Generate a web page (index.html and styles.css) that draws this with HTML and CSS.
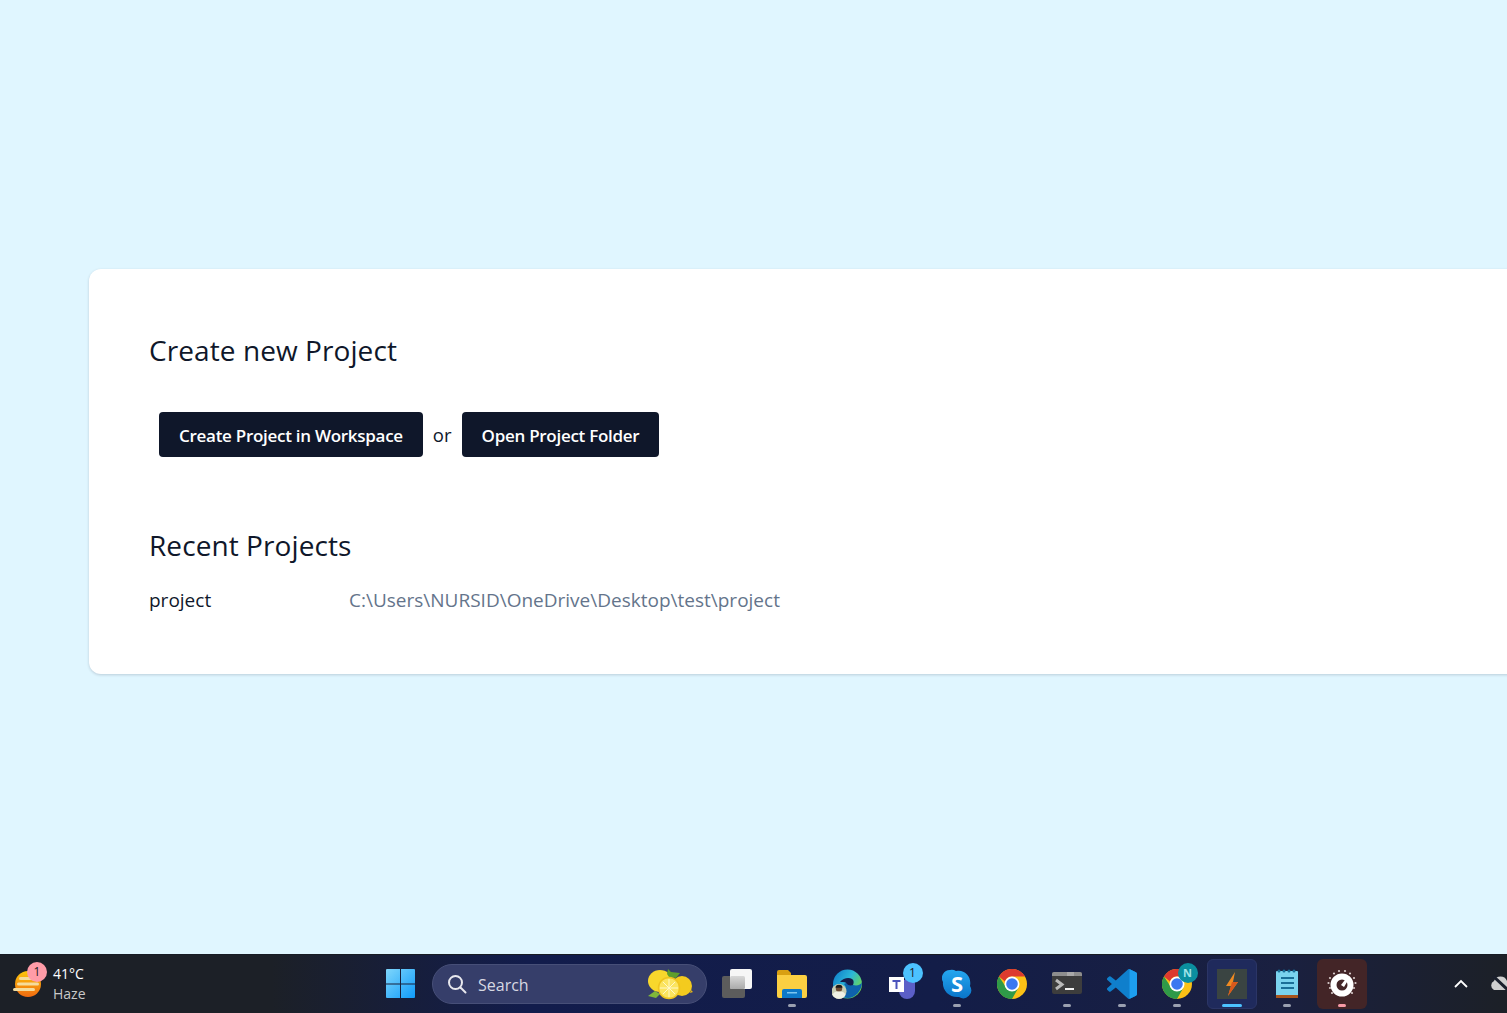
FILE: index.html
```html
<!DOCTYPE html>
<html lang="en">
<head>
<meta charset="utf-8">
<title>Projects</title>
<link rel="stylesheet" href="styles.css">
</head>
<body>
<main class="stage">
  <section class="card">
    <h2 class="title">Create new Project</h2>
    <div class="actions">
      <button class="btn"><span class="btn-label">Create Project in Workspace</span></button>
      <span class="or">or</span>
      <button class="btn"><span class="btn-label">Open Project Folder</span></button>
    </div>
    <h2 class="title recent">Recent Projects</h2>
    <div class="row">
      <span class="name">project</span>
      <span class="path">C:\Users\NURSID\OneDrive\Desktop\test\project</span>
    </div>
  </section>
</main>
<footer class="taskbar">
  <div class="weather">
    <div class="weather-icon">
      <svg width="30" height="30" viewBox="0 0 30 30"><defs><linearGradient id="sun" x1="0" y1="0" x2="0" y2="1"><stop offset="0" stop-color="#fdc70c"/><stop offset="1" stop-color="#f06a10"/></linearGradient></defs><circle cx="16" cy="15" r="13" fill="url(#sun)"/><g fill="#f5dc9c"><rect x="7" y="8" width="14" height="3" rx="1.500"/><rect x="5" y="13.500" width="22" height="3" rx="1.500"/><rect x="1" y="19" width="22" height="3" rx="1.500"/></g></svg>
      <span class="badge">1</span>
    </div>
    <div class="weather-text"><span class="temp">41°C</span><span class="cond">Haze</span></div>
  </div>
  <div class="apps">
    <div class="app">
      <svg width="30" height="30" viewBox="0 0 30 30"><defs><linearGradient id="win" x1="0" y1="0" x2="1" y2="1"><stop offset="0" stop-color="#7fd6fb"/><stop offset="1" stop-color="#0f9bfa"/></linearGradient></defs><path fill="url(#win)" d="M0 1a1 1 0 0 1 1-1h13v14.500H0zM15 0h13a1 1 0 0 1 1 1v13.500H15zM0 15.500h14V29H1a1 1 0 0 1-1-1zM15 15.500h14V28a1 1 0 0 1-1 1H15z"/></svg>
    </div>
    <div class="search">
      <svg width="22" height="22" viewBox="0 0 22 22" fill="none" stroke="#e8e8ee" stroke-width="2"><circle cx="9.500" cy="9.500" r="6.500"/><path d="M14.500 14.500l5 5" stroke-linecap="round"/></svg>
      <span class="search-text">Search</span>
      <svg class="lemon" width="46" height="32" viewBox="0 0 46 32"><ellipse cx="13" cy="13" rx="12" ry="11" fill="#f8d72c"/><ellipse cx="35" cy="18" rx="10" ry="10" fill="#f4cb1e"/><path d="M44 22l2 2-3 1z" fill="#e6b615"/><path d="M20 6l1-5 3 3 9 1-4 5-7-1z" fill="#5f9f2b"/><path d="M1 28l7-5 5 3-4 4z" fill="#7fb73a"/><circle cx="22" cy="20" r="10.500" fill="#fbe45f" stroke="#efc41e" stroke-width="1.500"/><g stroke="#fff8c8" stroke-width="1"><path d="M22 11v18M13 20h18M16 14l12 12M28 14L16 26"/></g></svg>
    </div>
    <div class="app">
      <svg width="30" height="30" viewBox="0 0 30 30"><defs><linearGradient id="tv" x1="0" y1="0" x2="0" y2="1"><stop offset="0" stop-color="#d8d8d8"/><stop offset="1" stop-color="#aaa"/></linearGradient></defs><rect x="0" y="7" width="23" height="22" rx="2" fill="#5c5c5c"/><rect x="8" y="0" width="22" height="20" rx="2" fill="#f6f6f6"/><rect x="8" y="7" width="15" height="13" rx="1.500" fill="url(#tv)"/></svg>
    </div>
    <div class="app">
      <svg width="30" height="30" viewBox="0 0 30 30"><path d="M0 3a2 2 0 0 1 2-2h9l3 3v22H2a2 2 0 0 1-2-2z" fill="#d9a012"/><path d="M0 6h28a2 2 0 0 1 2 2v19a2 2 0 0 1-2 2H2a2 2 0 0 1-2-2z" fill="#fbcf42"/><path d="M5 22a2 2 0 0 1 2-2h16a2 2 0 0 1 2 2v7H5z" fill="#0d78c8"/><rect x="10" y="23" width="10" height="1.500" fill="#7cc6f0"/></svg>
      <span class="dot"></span>
    </div>
    <div class="app">
      <svg width="30" height="30" viewBox="0 0 30 30"><defs><linearGradient id="edge" x1="0" y1="0" x2="1" y2=".6"><stop offset="0" stop-color="#0c77c9"/><stop offset=".55" stop-color="#2bb8d8"/><stop offset="1" stop-color="#6fd84a"/></linearGradient></defs><circle cx="15.500" cy="15" r="14.500" fill="url(#edge)"/><path d="M12 15c4-2 9-2 9 1 4 1 8 0 9-3 0 9-7 16-14 16-3 0-6-1-7-3 5-2 7-6 3-11z" fill="#0e62ac"/><path d="M8 13c3-4 9-5 12-3 2 1 2 4 1 6-3 1-5 0-6-1-1-2-3-2-7-2z" fill="#141d4b"/><circle cx="7" cy="22.500" r="7.500" fill="#c9ceb4"/><circle cx="7" cy="19.500" r="3.200" fill="#6e4d36"/><path d="M7 15.800a3.500 3 0 0 1 3.500 3H3.500a3.500 3 0 0 1 3.500-3z" fill="#1d1a18"/><path d="M.500 26c1-3 3-3.500 6.500-3.500s5.500.5 6.500 3.500a7.500 7.500 0 0 1-13 0z" fill="#f0f1e6"/></svg>
    </div>
    <div class="app">
      <svg width="30" height="30" viewBox="0 0 30 30"><circle cx="23" cy="9" r="5" fill="#7b83eb"/><path d="M12 11h14a2 2 0 0 1 2 2v9a8 8 0 0 1-16 0z" fill="#5b5fc7"/><rect x="2" y="8" width="15" height="15" fill="#fff"/><path d="M5.500 11h8v2h-3v7h-2v-7h-3z" fill="#4b53bc"/></svg>
      <span class="app-badge">1</span>
    </div>
    <div class="app">
      <svg width="30" height="30" viewBox="0 0 30 30"><defs><linearGradient id="sky" x1="0" y1="0" x2="0" y2="1"><stop offset="0" stop-color="#25a7ef"/><stop offset="1" stop-color="#0a75ca"/></linearGradient></defs><path d="M8 1a8 8 0 0 0-7 12c-1 8 6 16 16 15a8 8 0 0 0 11-11C30 7 22 0 14 2a8 8 0 0 0-6-1z" fill="url(#sky)"/><text class="skype" x="15" y="23" text-anchor="middle">S</text></svg>
      <span class="dot"></span>
    </div>
    <div class="app">
      <svg width="30" height="30" viewBox="0 0 30 30"><circle cx="15" cy="15" r="15" fill="#fbc116"/><path d="M2 7.500A15 15 0 0 1 28 7.500H15a7.500 7.500 0 0 0-7 5z" fill="#dd3a2e"/><path d="M2 7.500A15 15 0 0 0 15 30l6.500-11.500a7.500 7.500 0 0 1-13-1z" fill="#2f9a48"/><circle cx="15" cy="15" r="7.500" fill="#fff"/><circle cx="15" cy="15" r="5.800" fill="#3b78f0"/></svg>
    </div>
    <div class="app">
      <svg width="30" height="30" viewBox="0 0 30 30"><rect x="0" y="3" width="30" height="22" rx="2" fill="#3d3d3d"/><path d="M2 3h26a2 2 0 0 1 2 2v2H0V5a2 2 0 0 1 2-2z" fill="#8e8e8e"/><rect x="15" y="3" width="7" height="4" fill="#a9a9a9"/><path d="M4 11l6 4.500L4 20" fill="none" stroke="#b9b9b9" stroke-width="3"/><rect x="13" y="19" width="9" height="2" fill="#f2f2f2"/></svg>
      <span class="dot"></span>
    </div>
    <div class="app">
      <svg width="30" height="30" viewBox="0 0 100 100"><path fill="#0f7fcc" d="M70.900 99.300a6.200 6.200 0 0 0 5-.2l20.600-9.900A6.200 6.200 0 0 0 100 83.600V16.400a6.200 6.200 0 0 0-3.500-5.600L75.900.9a6.200 6.200 0 0 0-7.100 1.200L29.400 38 12.200 25a4.200 4.200 0 0 0-5.300.2L1.400 30.300a4.200 4.200 0 0 0 0 6.200L16.300 50 1.400 63.600a4.200 4.200 0 0 0 0 6.200l5.500 5a4.200 4.200 0 0 0 5.300.2l17.200-13 39.400 35.900a6.200 6.200 0 0 0 2.600 1.400zM75 27.300 45.100 50 75 72.700z"/><path fill="#1d9ff0" d="M75 .5l.9.4 20.600 9.900a6.200 6.200 0 0 1 3.500 5.600v67.200a6.200 6.200 0 0 1-3.500 5.600l-20.600 9.900-.9.4z"/></svg>
      <span class="dot"></span>
    </div>
    <div class="app">
      <svg width="30" height="30" viewBox="0 0 30 30"><circle cx="15" cy="15" r="15" fill="#fbc116"/><path d="M2 7.500A15 15 0 0 1 28 7.500H15a7.500 7.500 0 0 0-7 5z" fill="#dd3a2e"/><path d="M2 7.500A15 15 0 0 0 15 30l6.500-11.500a7.500 7.500 0 0 1-13-1z" fill="#2f9a48"/><circle cx="15" cy="15" r="7.500" fill="#fff"/><circle cx="15" cy="15" r="5.800" fill="#3b78f0"/></svg>
      <span class="app-badge teal">N</span>
      <span class="dot"></span>
    </div>
    <div class="app active">
      <svg width="30" height="30" viewBox="0 0 30 30"><rect width="30" height="30" fill="#3a4442"/><path d="M18 3L9 17h5l-3 10 10-14h-5z" fill="#ef8a22"/><path d="M15 13h6L11 27z" fill="#d8591c"/></svg>
      <span class="dot blue"></span>
    </div>
    <div class="app">
      <svg width="30" height="30" viewBox="0 0 30 30"><rect x="4" y="2" width="22" height="27" rx="1" fill="#7ad3ee"/><rect x="4" y="26" width="22" height="3" fill="#a8551c"/><g fill="#1a6f98"><circle cx="7" cy="2" r="1.500"/><circle cx="12" cy="2" r="1.500"/><circle cx="17" cy="2" r="1.500"/><circle cx="22" cy="2" r="1.500"/><rect x="9" y="8" width="13" height="2"/><rect x="9" y="13" width="13" height="2"/><rect x="9" y="18" width="13" height="2"/></g></svg>
      <span class="dot"></span>
    </div>
    <div class="app flagged">
      <svg width="34" height="34" viewBox="0 0 34 34"><circle cx="17" cy="18" r="8.500" fill="none" stroke="#fff" stroke-width="6"/><path d="M16 18l7-9 2 1-6 10z" fill="#fff"/><g fill="#d9cccc"><circle cx="5" cy="21" r="1.100"/><circle cx="3.500" cy="16" r="1.100"/><circle cx="5" cy="11" r="1.100"/><circle cx="9" cy="6.500" r="1.100"/><circle cx="14" cy="4" r="1.100"/><circle cx="20" cy="4" r="1.100"/><circle cx="25" cy="6.500" r="1.100"/><circle cx="29" cy="11" r="1.100"/><circle cx="30.500" cy="16" r="1.100"/><circle cx="29" cy="21" r="1.100"/><circle cx="7" cy="26" r="1.100"/><circle cx="27" cy="26" r="1.100"/></g></svg>
      <span class="dot pink"></span>
    </div>
  </div>
  <div class="tray">
    <svg width="16" height="10" viewBox="0 0 16 10" fill="none" stroke="#fff" stroke-width="1.800"><path d="M2 8l6-6 6 6"/></svg>
    <svg class="cloud" width="24" height="18" viewBox="0 0 24 18"><path d="M5 15a5 5 0 0 1 0-9 7 7 0 0 1 13 0 5 5 0 0 1 1 9z" fill="#cfcfcf"/><path d="M4 1l17 16" stroke="#1a1f2c" stroke-width="3"/></svg>
  </div>
</footer>
</body>
</html>
```

FILE: styles.css
```css
* { box-sizing: border-box; }
html, body { height: 100%; margin: 0; }
body {
  display: flex;
  flex-direction: column;
  overflow: hidden;
  background: #e0f6ff;
  color: #0f172a;
  font-family: "Open Sans", "Noto Sans", sans-serif;
}
.stage {
  flex: 1;
  display: flex;
  align-items: flex-start;
  min-height: 0;
  padding: 269px 0 0 89px;
}
.card {
  flex: none;
  width: 1600px;
  height: 405px;
  padding: 59px 60px 60px;
  background: #fff;
  border-radius: 12px;
  box-shadow: 0 1px 3px rgba(15, 23, 42, .18);
}
.title {
  margin: 0;
  font-size: 28px;
  font-weight: 400;
  line-height: 44px;
  letter-spacing: .08px;
}
.actions {
  display: flex;
  align-items: center;
  gap: 10px;
  margin: 40px 0 0 10px;
}
.btn {
  height: 45px;
  padding: 0 20px;
  border: 0;
  border-radius: 4px;
  background: #0f172a;
  color: #fff;
  font: 600 17px "Open Sans", sans-serif;
  letter-spacing: -.28px;
}
.btn-label { display: block; padding-top: 1px; }
.or { font-size: 18.500px; }
.recent { margin-top: 66px; }
.row {
  display: flex;
  margin-top: 19px;
  font-size: 19px;
  line-height: 28px;
}
.name { width: 200px; }
.path { color: #64748b; }

.taskbar {
  flex: none;
  height: 59px;
  display: flex;
  align-items: center;
  background: linear-gradient(90deg, #1c2027 0, #1c2027 18%, #121c4c 35%, #131d48 62%, #1a2040 85%, #1c2027 100%);
  border-top: 1px solid #181c24;
  color: #fff;
  overflow: hidden;
}
.weather {
  flex: none;
  width: 373px;
  display: flex;
  align-items: center;
  gap: 11px;
  padding-left: 12px;
}
.weather-icon { position: relative; width: 30px; height: 30px; }
.badge {
  position: absolute;
  top: -7px;
  right: -5px;
  width: 20px;
  height: 20px;
  border-radius: 50%;
  background: #ff9ca8;
  color: #222;
  font-size: 12px;
  line-height: 20px;
  text-align: center;
}
.weather-text { display: flex; flex-direction: column; font-size: 14px; line-height: 20px; }
.temp { color: #fff; }
.cond { color: #c9c9c9; }
.apps { display: flex; align-items: center; flex: none; }
.app {
  position: relative;
  flex: none;
  width: 55px;
  height: 50px;
  display: flex;
  align-items: center;
  justify-content: center;
}
.active::before, .flagged::before {
  content: "";
  position: absolute;
  inset: 0 2.500px;
  border-radius: 6px;
  z-index: 0;
}
.active::before { background: #1f2a5c; border: 1px solid #2b3566; }
.flagged::before { background: #432527; }
.app svg { position: relative; z-index: 1; }
.dot {
  position: absolute;
  z-index: 1;
  left: 50%;
  bottom: 2px;
  width: 8px;
  height: 3px;
  margin-left: -4px;
  border-radius: 2px;
  background: #9aa0b0;
}
.dot.blue { width: 20px; margin-left: -10px; background: #4cc2ff; }
.dot.pink { background: #f79aa6; }
.app-badge {
  position: absolute;
  z-index: 2;
  top: 4px;
  right: 7px;
  width: 20px;
  height: 20px;
  border-radius: 50%;
  background: #4cc2ff;
  color: #1c2027;
  font-size: 12px;
  line-height: 20px;
  text-align: center;
}
.app-badge.teal { background: #0b8f9f; color: #9fe4e8; font-weight: 700; font-size: 11px; }
.skype { fill: #fff; font: 700 22px "Open Sans", sans-serif; }
.search {
  flex: none;
  width: 275px;
  height: 40px;
  margin: 0 2.500px 0 4px;
  padding: 0 13px 0 13px;
  display: flex;
  align-items: center;
  gap: 10px;
  border-radius: 20px;
  background: #363e6a;
  border: 1px solid #474f78;
}
.search-text { flex: 1; font-size: 16px; color: #d6d8e2; padding-top: 1px; }
.tray {
  flex: none;
  margin-left: 83px;
  display: flex;
  align-items: center;
  gap: 20px;
}
.cloud { flex: none; }
```
